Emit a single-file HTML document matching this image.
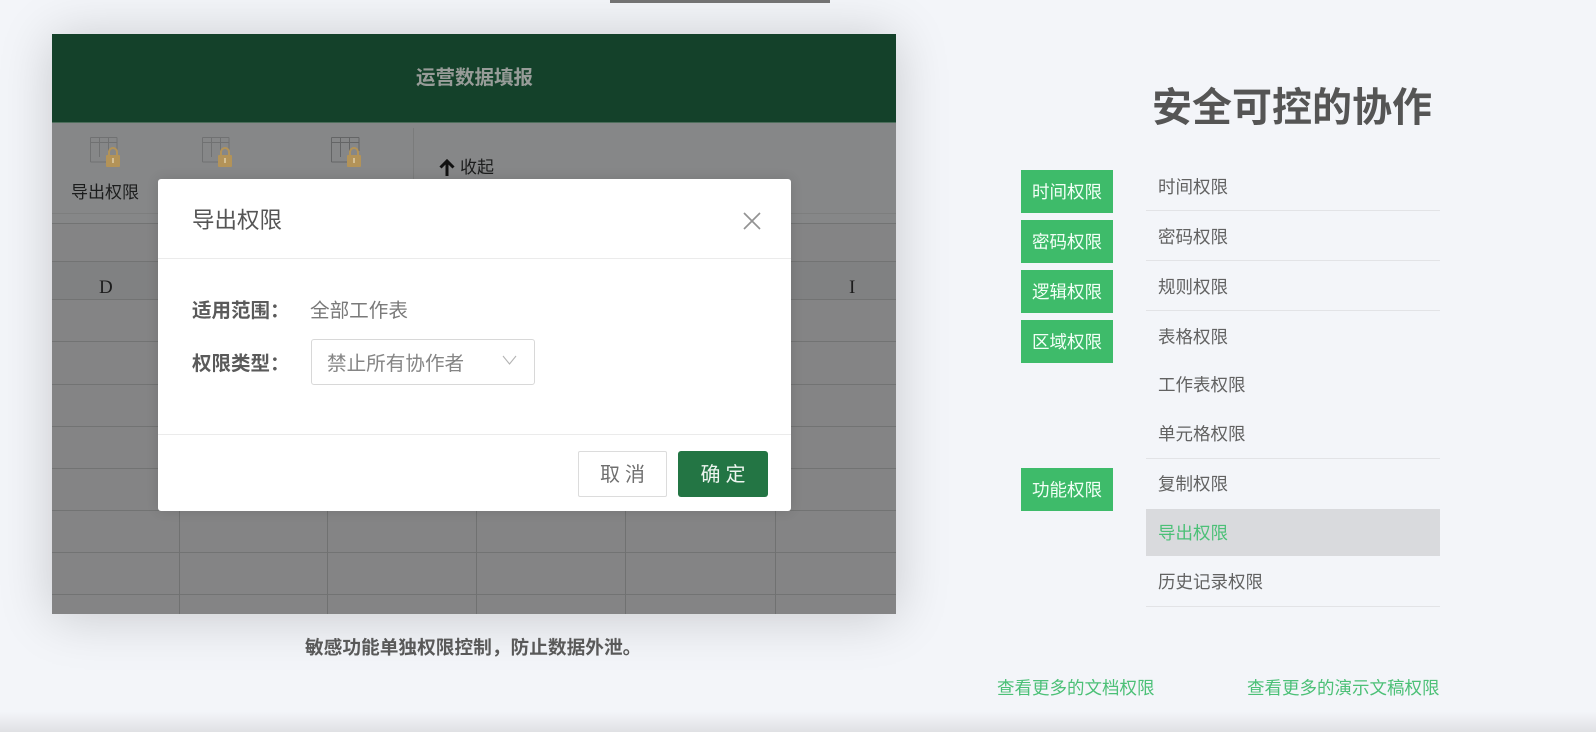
<!DOCTYPE html>
<html lang="zh"><head><meta charset="utf-8"><title>安全可控的协作</title>
<style>
html,body{margin:0;padding:0;width:1596px;height:732px;overflow:hidden;background:#f3f5f9}
body{position:relative;font-family:"Liberation Sans","Noto Sans CJK SC",sans-serif}
#w{position:absolute;left:0;top:0;width:1596px;height:732px;overflow:hidden;filter:blur(.35px)}
.a{position:absolute}
.t{position:absolute;white-space:nowrap;line-height:24px;height:24px}
.hl{position:absolute;left:0;width:844px;height:1px;background:#727373}
.vl{position:absolute;width:1px;height:320px;background:#707171}
.tag{position:absolute;left:1021px;width:92px;height:43px;background:#3ebb6a;color:#f2fff6;font-size:17.5px;line-height:44px;text-align:center}
.li{position:absolute;left:1158px;white-space:nowrap;font-size:17.5px;line-height:24px;color:#626262}
.ln{position:absolute;left:1146px;width:294px;height:1px;background:#e2e3e6}
</style></head><body><div id="w">
<div class="a" style="left:0;top:712px;width:1596px;height:20px;background:linear-gradient(#f3f5f9,#e0e1e4)"></div>
<div class="a" style="left:610px;top:0;width:220px;height:3px;background:#757575"></div>

<div class="a" style="left:52px;top:34px;width:844px;height:580px;background:#868788;box-shadow:0 3px 50px rgba(0,0,0,.18);overflow:hidden">
  <div class="a" style="left:0;top:0;width:844px;height:89px;background:#14412a;border-bottom:1px solid #4d6d5b;box-sizing:border-box"></div>
  <div class="t" style="left:364px;top:32px;font-size:19.5px;font-weight:700;color:#979c98">运营数据填报</div>
  <div class="a" style="left:361px;top:94px;width:1px;height:60px;background:#7a7b7b"></div>
  <div class="a" style="left:0;top:190px;width:844px;height:390px;background:#848485"></div>

  <svg class="a" style="left:38px;top:103px" width="32" height="31" viewBox="0 0 32 31"><path d="M.5.5H27M.5 5.500H27M.5 25H16M.5.5V25M9.500.5V20M18.500.5V14M27 .5V14" fill="none" stroke="#707172" stroke-width="1"/><path d="M19 18V15a4 4 0 0 1 8 0V18" fill="none" stroke="#b39358" stroke-width="2"/><rect x="16" y="18" width="14" height="12" rx="1" fill="#b39358"/><path d="M23 21V26" stroke="#dccaa4" stroke-width="1.600"/></svg>
  <svg class="a" style="left:150px;top:103px" width="32" height="31" viewBox="0 0 32 31"><path d="M.5.5H27M.5 5.500H27M.5 25H16M.5.5V25M9.500.5V20M18.500.5V14M27 .5V14" fill="none" stroke="#707172" stroke-width="1"/><path d="M19 18V15a4 4 0 0 1 8 0V18" fill="none" stroke="#b39358" stroke-width="2"/><rect x="16" y="18" width="14" height="12" rx="1" fill="#b39358"/><path d="M23 21V26" stroke="#dccaa4" stroke-width="1.600"/></svg>
  <svg class="a" style="left:279px;top:103px" width="32" height="31" viewBox="0 0 32 31"><path d="M.5.5H28M.5 5.500H28M.5 25H16M.5.5V25M9.500.5V20M18.500.5V14M28 .5V14" fill="none" stroke="#646566" stroke-width="1"/><path d="M19 18V15a4 4 0 0 1 8 0V18" fill="none" stroke="#b39358" stroke-width="2"/><rect x="16" y="18" width="14" height="12" rx="1" fill="#b39358"/><path d="M23 21V26" stroke="#dccaa4" stroke-width="1.600"/></svg>

  <div class="t" style="left:19px;top:147px;font-size:17px;color:#1c1d1d">导出权限</div>
  <svg class="a" style="left:386px;top:124px" width="18" height="19" viewBox="0 0 18 19"><path d="M9 18V3M2.500 9.500 9 3 15.500 9.500" fill="none" stroke="#111" stroke-width="3"/></svg>
  <div class="t" style="left:408px;top:122px;font-size:17px;color:#1c1d1d">收起</div>

  <div class="hl" style="top:179px;background:#7d7e7e"></div>
  <div class="hl" style="top:189px"></div>
  <div class="a" style="left:0;top:227px;width:844px;height:38px;background:#808182"></div>
  <div class="hl" style="top:227px"></div>
  <div class="hl" style="top:265px"></div>
  <div class="hl" style="top:307px"></div>
  <div class="hl" style="top:350px"></div>
  <div class="hl" style="top:392px"></div>
  <div class="hl" style="top:434px"></div>
  <div class="hl" style="top:476px"></div>
  <div class="hl" style="top:518px"></div>
  <div class="hl" style="top:560px"></div>
  <div class="vl" style="left:127px;top:265px"></div>
  <div class="vl" style="left:275px;top:265px"></div>
  <div class="vl" style="left:424px;top:265px"></div>
  <div class="vl" style="left:573px;top:265px"></div>
  <div class="vl" style="left:723px;top:265px"></div>
  <div class="t" style="left:47px;top:242px;font:19px/24px 'Liberation Serif',serif;color:#1c1c1c">D</div>
  <div class="t" style="left:797px;top:242px;font:19px/24px 'Liberation Serif',serif;color:#1c1c1c">I</div>
</div>

<div class="a" style="left:158px;top:179px;width:633px;height:332px;background:#fff;border-radius:3px;box-shadow:0 0 12px rgba(0,0,0,.12)">
  <div class="a" style="left:0;top:79px;width:633px;height:1px;background:#ebebeb"></div>
  <div class="a" style="left:0;top:255px;width:633px;height:1px;background:#ebebeb"></div>
  <div class="t" style="left:34px;top:30px;font-size:22.500px;color:#555">导出权限</div>
  <svg class="a" style="left:585px;top:33px" width="18" height="18" viewBox="0 0 18 18"><path d="M1 1 17 17M17 1 1 17" stroke="#939393" stroke-width="1.700" fill="none"/></svg>
  <div class="t" style="left:34px;top:120px;font-size:19.500px;font-weight:700;color:#5a5a5a">适用范围：</div>
  <div class="t" style="left:152px;top:120px;font-size:19.600px;color:#7a7a7a">全部工作表</div>
  <div class="t" style="left:34px;top:173px;font-size:19.500px;font-weight:700;color:#5a5a5a">权限类型：</div>
  <div class="a" style="left:153px;top:160px;width:224px;height:46px;border:1px solid #d8d8d8;border-radius:3px;box-sizing:border-box"></div>
  <div class="t" style="left:169px;top:173px;font-size:19.600px;color:#858585">禁止所有协作者</div>
  <svg class="a" style="left:344px;top:176px" width="15" height="10" viewBox="0 0 15 10"><path d="M1 1 7.500 9 14 1" stroke="#b4b4b4" stroke-width="1.100" fill="none"/></svg>
  <div class="a" style="left:420px;top:272px;width:89px;height:46px;border:1px solid #dcdcdc;border-radius:2px;box-sizing:border-box;text-align:center;font-size:20px;line-height:46px;letter-spacing:5px;color:#6f6f6f;text-indent:5px">取消</div>
  <div class="a" style="left:520px;top:272px;width:90px;height:46px;background:#237544;border-radius:3px;text-align:center;font-size:20px;line-height:48px;letter-spacing:5px;color:#eef5f0;text-indent:5px">确定</div>
</div>

<div class="t" style="left:305px;top:636px;font-size:18.700px;font-weight:700;color:#595959">敏感功能单独权限控制，防止数据外泄。</div>

<div class="t" style="left:1152px;top:85px;height:46px;line-height:46px;font-size:40px;font-weight:700;color:#555">安全可控的协作</div>

<div class="tag" style="top:170px">时间权限</div>
<div class="tag" style="top:220px">密码权限</div>
<div class="tag" style="top:270px">逻辑权限</div>
<div class="tag" style="top:320px">区域权限</div>
<div class="tag" style="top:468px">功能权限</div>

<div class="a" style="left:1146px;top:509px;width:294px;height:47px;background:#d9dadd"></div>
<div class="li" style="top:175px">时间权限</div><div class="ln" style="top:210px"></div>
<div class="li" style="top:225px">密码权限</div><div class="ln" style="top:260px"></div>
<div class="li" style="top:275px">规则权限</div><div class="ln" style="top:310px"></div>
<div class="li" style="top:325px">表格权限</div>
<div class="li" style="top:373px">工作表权限</div>
<div class="li" style="top:422px">单元格权限</div><div class="ln" style="top:458px"></div>
<div class="li" style="top:472px">复制权限</div>
<div class="li" style="top:521px;color:#4cc077">导出权限</div>
<div class="li" style="top:570px">历史记录权限</div><div class="ln" style="top:606px"></div>

<div class="t" style="left:997px;top:676px;font-size:17.500px;color:#4cc077">查看更多的文档权限</div>
<div class="t" style="left:1247px;top:676px;font-size:17.500px;color:#4cc077">查看更多的演示文稿权限</div>
</div></body></html>
